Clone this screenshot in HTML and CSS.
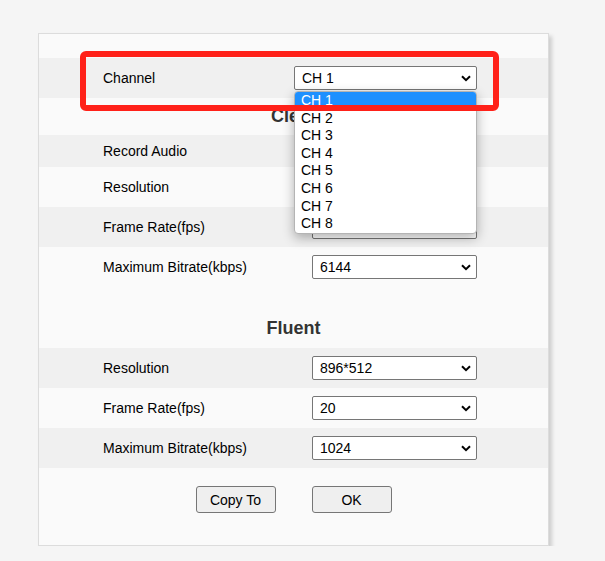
FILE: index.html
```html
<!DOCTYPE html>
<html lang="en">
<head>
    <meta charset="UTF-8">
    <title>Record Settings</title>
    <link rel="stylesheet" href="styles.css">
</head>
<body>
    <div class="panel">
        <div class="row row-gray">
            <span class="label label-channel">Channel</span>
            <div class="select select-channel">
                <span>CH 1</span>
                <svg class="arrow" width="10" height="7" viewBox="0 0 10 7"><path d="M1 1.2 L5 5.2 L9 1.2" fill="none" stroke="#000" stroke-width="2"/></svg>
                <ul class="dropdown">
                    <li class="active">CH 1</li>
                    <li>CH 2</li>
                    <li>CH 3</li>
                    <li>CH 4</li>
                    <li>CH 5</li>
                    <li>CH 6</li>
                    <li>CH 7</li>
                    <li>CH 8</li>
                </ul>
            </div>
            <div class="mark"></div>
        </div>

        <h3 class="section-title title-clear">Clear</h3>
        <div class="row row-gray row-short">
            <span class="label">Record Audio</span>
            <input type="checkbox" class="check" checked>
        </div>
        <!-- values of these two are covered by the open channel list -->
        <div class="row">
            <span class="label">Resolution</span>
            <div class="select">
                <span></span>
                <svg class="arrow" width="10" height="7" viewBox="0 0 10 7"><path d="M1 1.2 L5 5.2 L9 1.2" fill="none" stroke="#000" stroke-width="2"/></svg>
            </div>
        </div>
        <div class="row row-gray">
            <span class="label">Frame Rate(fps)</span>
            <div class="select">
                <span></span>
                <svg class="arrow" width="10" height="7" viewBox="0 0 10 7"><path d="M1 1.2 L5 5.2 L9 1.2" fill="none" stroke="#000" stroke-width="2"/></svg>
            </div>
        </div>
        <div class="row">
            <span class="label">Maximum Bitrate(kbps)</span>
            <div class="select">
                <span>6144</span>
                <svg class="arrow" width="10" height="7" viewBox="0 0 10 7"><path d="M1 1.2 L5 5.2 L9 1.2" fill="none" stroke="#000" stroke-width="2"/></svg>
            </div>
        </div>

        <h3 class="section-title title-fluent">Fluent</h3>
        <div class="row row-gray">
            <span class="label">Resolution</span>
            <div class="select">
                <span>896*512</span>
                <svg class="arrow" width="10" height="7" viewBox="0 0 10 7"><path d="M1 1.2 L5 5.2 L9 1.2" fill="none" stroke="#000" stroke-width="2"/></svg>
            </div>
        </div>
        <div class="row">
            <span class="label">Frame Rate(fps)</span>
            <div class="select">
                <span>20</span>
                <svg class="arrow" width="10" height="7" viewBox="0 0 10 7"><path d="M1 1.2 L5 5.2 L9 1.2" fill="none" stroke="#000" stroke-width="2"/></svg>
            </div>
        </div>
        <div class="row row-gray">
            <span class="label">Maximum Bitrate(kbps)</span>
            <div class="select">
                <span>1024</span>
                <svg class="arrow" width="10" height="7" viewBox="0 0 10 7"><path d="M1 1.2 L5 5.2 L9 1.2" fill="none" stroke="#000" stroke-width="2"/></svg>
            </div>
        </div>

        <div class="actions">
            <button class="btn">Copy To</button>
            <button class="btn">OK</button>
        </div>
    </div>
</body>
</html>
```

FILE: styles.css
```css
body {
    margin: 0;
    background-color: #f5f5f5;
    font-family: "Liberation Sans", Arial, sans-serif;
    font-size: 14px;
    color: #000;
}
.panel {
    position: relative;
    box-sizing: border-box;
    width: 511px;
    margin: 33px 0 0 38px;
    padding: 24px 0 32px;
    background: #fafafa;
    border: 1px solid #dcdcdc;
    box-shadow: 3px 3px 4px rgba(0, 0, 0, 0.16);
}
.row {
    position: relative;
    display: flex;
    align-items: center;
    height: 40px;
    padding-left: 64px;
}
.row-gray {
    background: #f0f0f0;
}
.row-short {
    height: 32px;
}
.label {
    width: 209px;
    flex-shrink: 0;
}
.label-channel {
    width: 191px;
}
.section-title {
    margin: 0;
    font-size: 18px;
    font-weight: bold;
    color: #333;
    text-align: center;
}
.title-clear {
    height: 37px;
    line-height: 37px;
}
.title-fluent {
    margin-top: 21px;
    height: 40px;
    line-height: 40px;
}
.select {
    position: relative;
    box-sizing: border-box;
    display: flex;
    align-items: center;
    justify-content: space-between;
    width: 165px;
    height: 24px;
    padding: 0 5px 0 7px;
    background: #fff;
    border: 1px solid #767676;
    border-radius: 2px;
}
.select-channel {
    width: 183px;
}
.arrow {
    display: block;
}
.check {
    margin: 0;
}
.dropdown {
    position: absolute;
    top: 24px;
    left: -1px;
    z-index: 5;
    box-sizing: border-box;
    width: 183px;
    margin: 0;
    padding: 0;
    list-style: none;
    background: #fff;
    border: 1px solid #b4b4b4;
    border-radius: 4px;
    box-shadow: 0 4px 12px rgba(0, 0, 0, 0.3);
    overflow: hidden;
}
.dropdown li {
    height: 17.6px;
    line-height: 17.6px;
    padding-left: 6px;
}
.dropdown .active {
    background: #1e90ff;
    color: #fff;
}
.mark {
    position: absolute;
    top: -7px;
    left: 41px;
    z-index: 6;
    box-sizing: border-box;
    width: 419px;
    height: 60px;
    border: 6px solid #ff2119;
    border-radius: 6px;
}
.actions {
    display: flex;
    justify-content: center;
    gap: 36px;
    margin-top: 18px;
}
.btn {
    width: 80px;
    height: 27px;
    padding: 0;
    font-family: inherit;
    font-size: 14px;
    color: #000;
    background: #efefef;
    border: 1px solid #767676;
    border-radius: 3px;
}
```
